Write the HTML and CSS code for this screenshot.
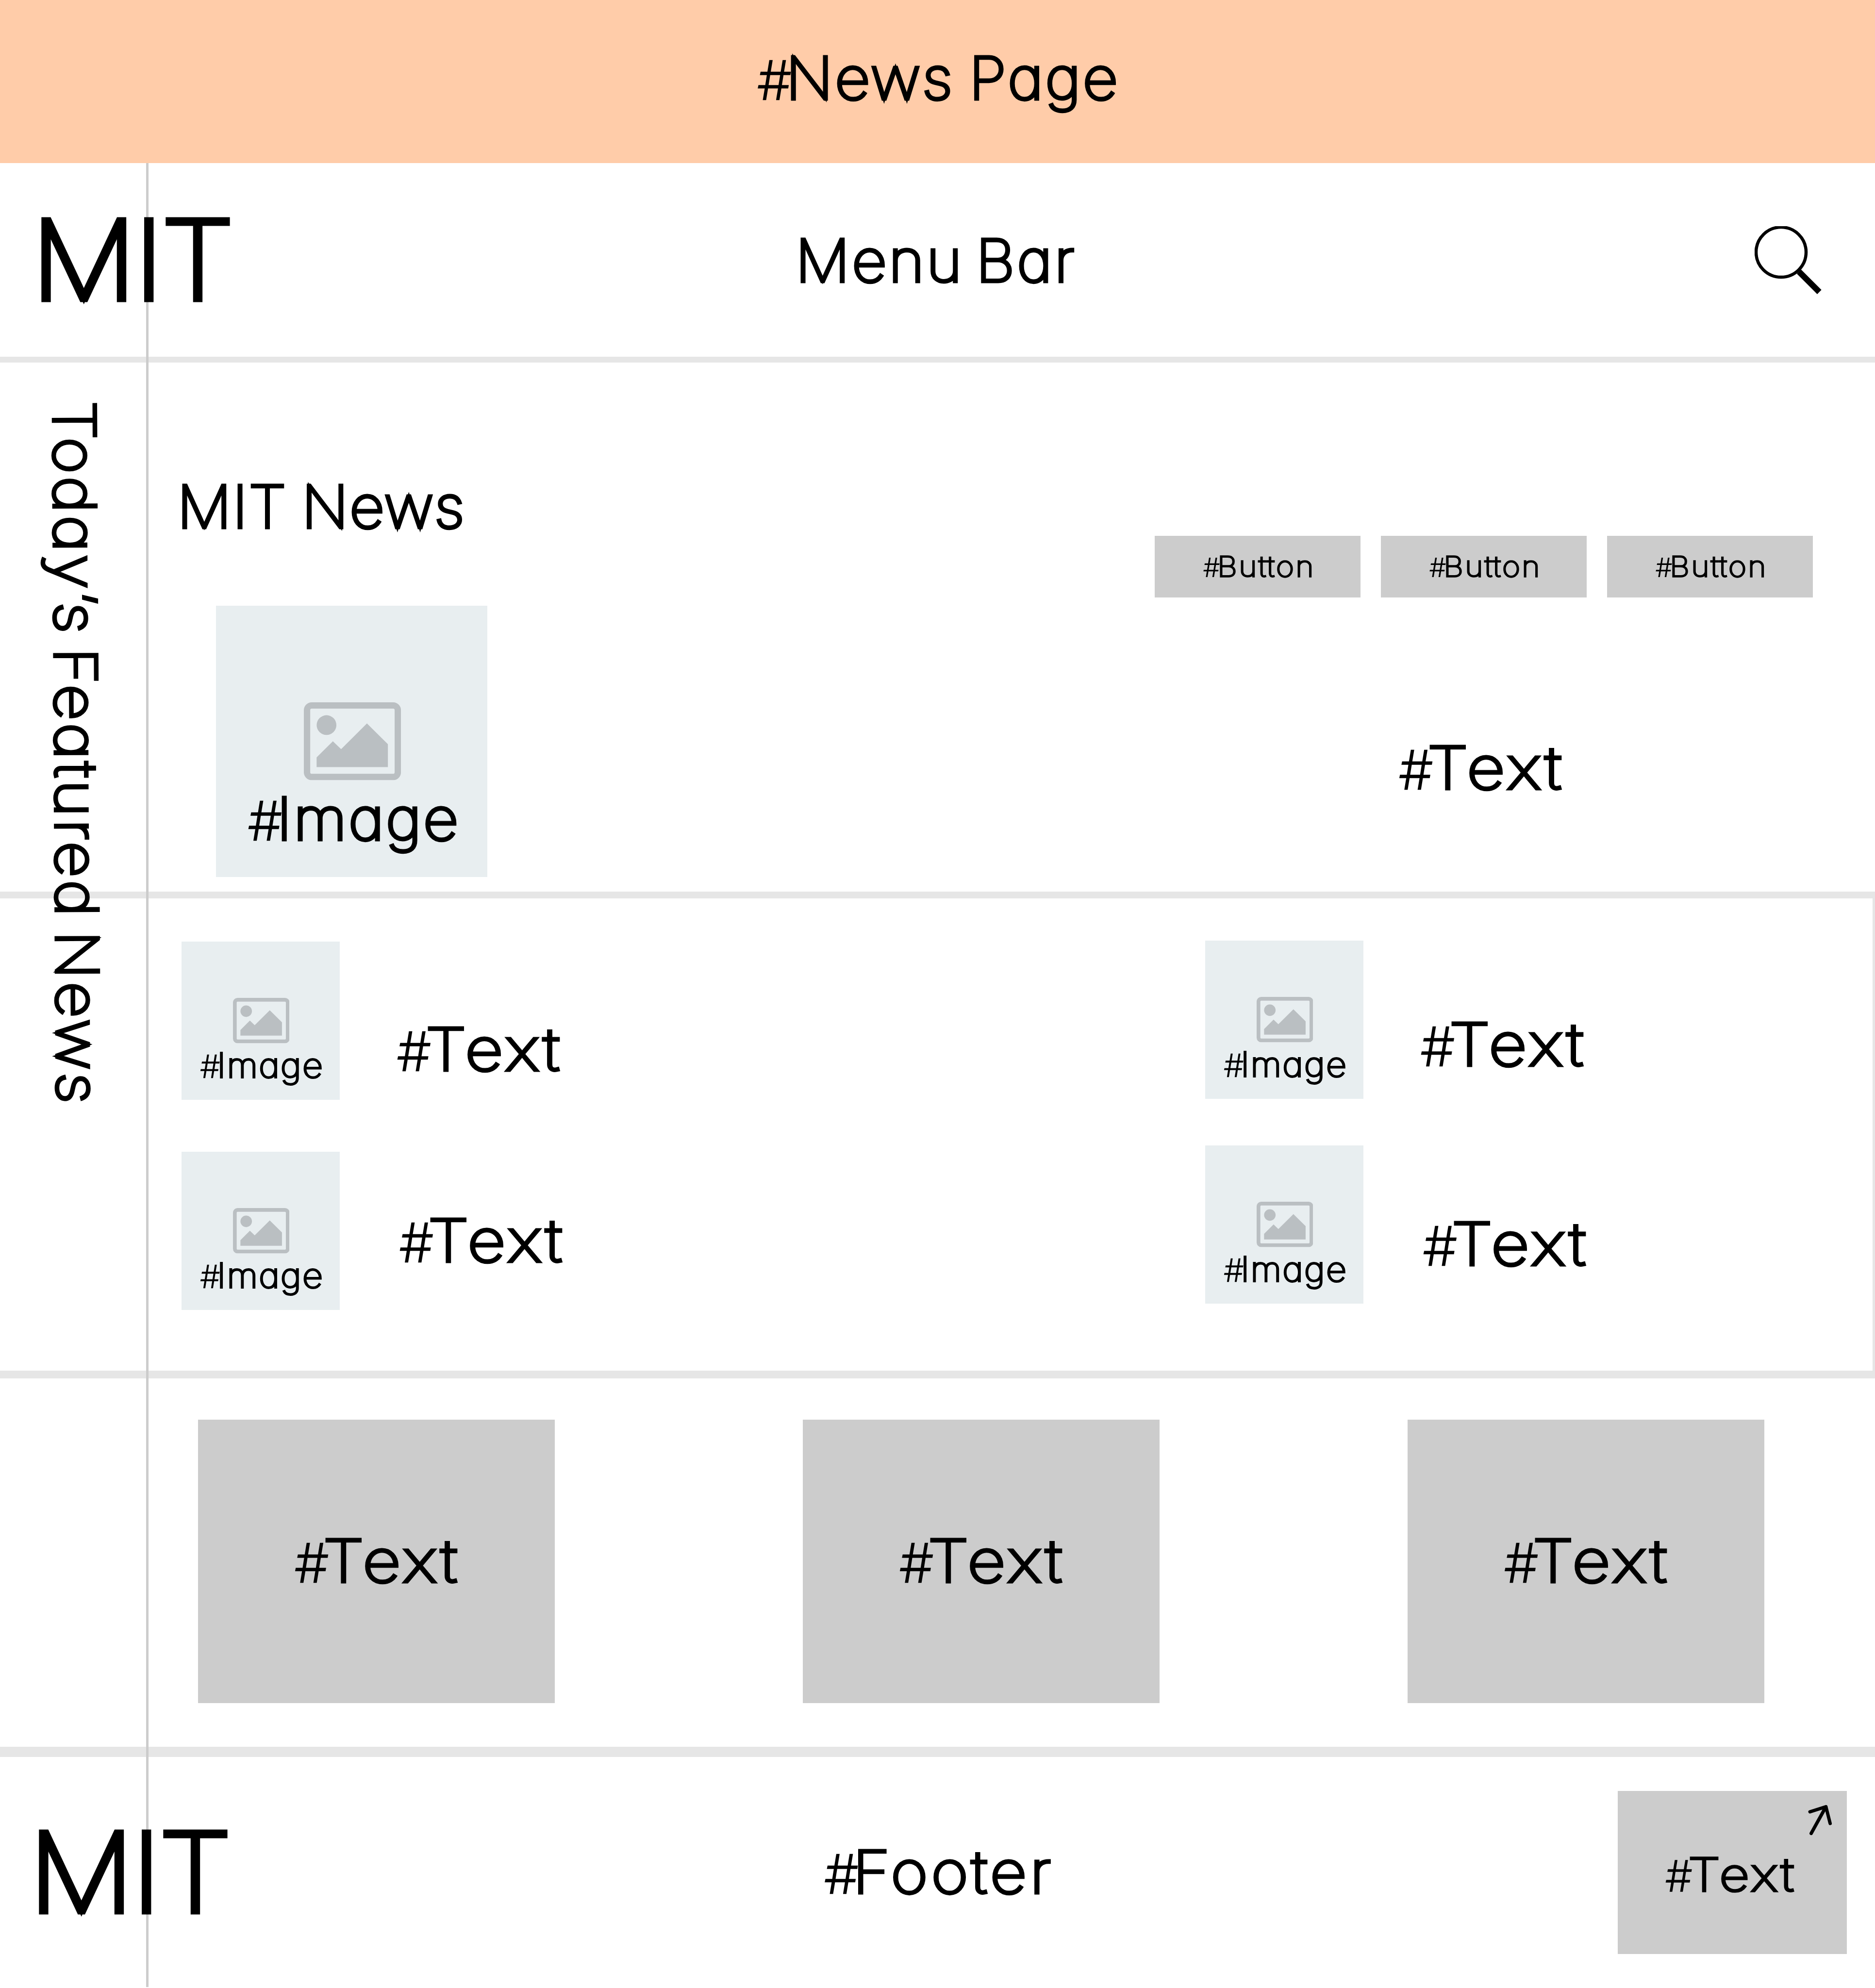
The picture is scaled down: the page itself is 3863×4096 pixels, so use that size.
FILE: index.html
```html
<!DOCTYPE html>
<html lang="en">
<head>
<meta charset="utf-8">
<title>News Page</title>
<link rel="stylesheet" href="styles.css">
</head>
<body>
<svg class="defs" aria-hidden="true">
  <symbol id="picture" viewBox="215.7 237.5 238.3 191">
    <rect x="223.5" y="245.3" width="222.7" height="175.4" rx="11.5" fill="none" stroke="#babfc2" stroke-width="15.6"/>
    <circle cx="271.3" cy="293.4" r="24.2" fill="#babfc2"/>
    <path d="M247 372.7 286.9 333 307.1 352.4 370.5 289.4 421.9 340.3V396.5H247Z" fill="#babfc2"/>
  </symbol>
</svg>

<header class="banner"><h1 class="label t-page"><span class="hash">#</span><span class="word">News Page</span></h1></header>

<div class="topbar">
  <span class="logo">MIT</span>
  <nav class="label t-menu"><span class="word">Menu Bar</span></nav>
  <svg class="search" viewBox="0 0 140 140" fill="none" stroke="#000"><circle cx="54.5" cy="53.6" r="51.5" stroke-width="6.5"/><path d="M91.3 93.7 133.3 135.7" stroke-width="12.3"/></svg>
</div>

<section class="hero">
  <div class="hero-main">
    <h2 class="label t-mitnews"><span class="word">MIT News</span></h2>
    <figure class="image large"><svg><use href="#picture"/></svg><figcaption class="t-image"><span class="hash">#</span><span class="word">Image</span></figcaption></figure>
  </div>
  <div class="hero-side">
    <div class="buttons">
      <button class="t-button"><span class="hash">#</span><span class="word">Button</span></button>
      <button class="t-button"><span class="hash">#</span><span class="word">Button</span></button>
      <button class="t-button"><span class="hash">#</span><span class="word">Button</span></button>
    </div>
    <p class="label t-text"><span class="hash">#</span><span class="word">Text</span></p>
  </div>
</section>

<section class="features">
  <div class="column left">
    <article><figure class="image"><svg><use href="#picture"/></svg><figcaption class="t-image"><span class="hash">#</span><span class="word">Image</span></figcaption></figure><p class="label t-text"><span class="hash">#</span><span class="word">Text</span></p></article>
    <article><figure class="image"><svg><use href="#picture"/></svg><figcaption class="t-image"><span class="hash">#</span><span class="word">Image</span></figcaption></figure><p class="label t-text"><span class="hash">#</span><span class="word">Text</span></p></article>
  </div>
  <div class="column right">
    <article><figure class="image"><svg><use href="#picture"/></svg><figcaption class="t-image"><span class="hash">#</span><span class="word">Image</span></figcaption></figure><p class="label t-text"><span class="hash">#</span><span class="word">Text</span></p></article>
    <article><figure class="image"><svg><use href="#picture"/></svg><figcaption class="t-image"><span class="hash">#</span><span class="word">Image</span></figcaption></figure><p class="label t-text"><span class="hash">#</span><span class="word">Text</span></p></article>
  </div>
</section>

<section class="cards">
  <div class="card"><p class="label t-text"><span class="hash">#</span><span class="word">Text</span></p></div>
  <div class="card"><p class="label t-text"><span class="hash">#</span><span class="word">Text</span></p></div>
  <div class="card"><p class="label t-text"><span class="hash">#</span><span class="word">Text</span></p></div>
</section>

<footer class="footer">
  <span class="logo">MIT</span>
  <p class="label t-footer"><span class="hash">#</span><span class="word">Footer</span></p>
  <div class="link-card">
    <p class="label t-text"><span class="hash">#</span><span class="word">Text</span></p>
    <svg class="arrow" viewBox="0 0 60 70" fill="none" stroke="#000" stroke-width="6.9" stroke-linecap="round" stroke-linejoin="round"><path d="M8.5 61.5 38.9 6.5M6 17 38.9 6.5 47.6 41"/></svg>
  </div>
</footer>

<div class="rail"></div>
<p class="rail-title label">Today’s Featured News</p>
</body>
</html>
```
FILE: styles.css
```css
* { box-sizing: border-box; margin: 0; padding: 0; }

body {
  position: relative;
  width: 3863px;
  height: 4096px;
  overflow: hidden;
  background: #fff;
  color: #000;
  font-family: Inter, "Liberation Sans", sans-serif;
  font-weight: 100;
  font-feature-settings: "cv11";
}

.defs { position: absolute; width: 0; height: 0; }

/* Type: hairline weight thickened by an outline, which rounds the corners */
.label, .logo, button, figcaption { -webkit-text-stroke: 0.058em #000; white-space: nowrap; }
.label { padding-top: 3px; font-size: 119px; line-height: 119px; font-weight: 100; }
.logo { font-size: 222px; line-height: 222px; letter-spacing: -0.015em; transform: scaleX(1.085); transform-origin: 0 50%; }
.hash { font-size: 0.9em; letter-spacing: -0.095em; -webkit-text-stroke-width: 0.042em; }
.word { display: inline-block; transform-origin: 0 50%; }

.t-page .word { letter-spacing: 0.031em; word-spacing: -0.07em; transform: scaleX(1.06); margin-right: 0.28em; }
.t-menu .word { letter-spacing: 0.036em; word-spacing: -0.12em; transform: scaleX(1.05); margin-right: 0.21em; }
.t-mitnews .word { letter-spacing: 0.018em; word-spacing: -0.06em; transform: scaleX(1.05); }
.t-image .word { letter-spacing: 0.029em; transform: scaleX(1.06); margin-right: 0.126em; }
.t-text .word { letter-spacing: 0.063em; transform: scaleX(1.14); margin-right: 0.235em; }
.t-button .word { letter-spacing: 0.054em; transform: scaleX(1.1); margin-right: 0.19em; }
.t-footer .word { letter-spacing: 0.056em; transform: scaleX(1.1); margin-right: 0.26em; }

.banner {
  display: flex;
  justify-content: center;
  height: 336px;
  padding-top: 99px;
  background: #ffcca9;
}

.topbar {
  display: grid;
  grid-template-columns: 1fr auto 1fr;
  align-items: center;
  height: 411px;
  padding: 0 108px 0 65px;
  border-bottom: 12px solid #e6e6e6;
}
.topbar .label { margin-left: 33px; }
.search { justify-self: end; width: 140px; height: 140px; }

.hero {
  display: flex;
  justify-content: space-between;
  height: 1104px;
  padding: 0 128px 0 365px;
  border-bottom: 14px solid #e6e6e6;
}
.hero-main { padding-top: 235px; }
.hero-main .image { margin: 144px 0 0 80px; }
.hero-side { display: flex; flex-direction: column; align-items: center; padding-top: 357px; }
.hero-side .label { margin: 289px 13px 0 0; }

.buttons { display: flex; gap: 42px; }
button {
  width: 424px;
  height: 127px;
  border: 0;
  background: #ccc;
  color: inherit;
  font: 100 58px/58px Inter, "Liberation Sans", sans-serif;
}

.image {
  display: flex;
  flex-direction: column;
  align-items: center;
  width: 4.7em;
  height: 4.7em;
  padding: 1.676em 0 0 0.03em;
  background: #e8eef0;
  font-size: 69.35px;
  line-height: 1;
}
.image.large { font-size: 119px; }
.image svg { width: 1.682em; height: 1.348em; }
.image figcaption { margin-top: 0.167em; }

.features {
  display: grid;
  grid-template-columns: 2109px 1fr;
  height: 989px;
  padding-left: 374px;
  border-bottom: 16px solid #e6e6e6;
  border-right: 5px solid #e6e6e6;
}
.column { display: flex; flex-direction: column; }
.column.left { padding-top: 89px; gap: 107px; }
.column.right { padding-top: 87px; gap: 96px; }
article { display: flex; gap: 119px; }
.left article:first-child .label { margin-top: 160px; }
.left article:last-child .label { margin: 121px 0 0 5px; }
.right article:first-child .label { margin-top: 152px; }
.right article:last-child .label { margin: 141px 0 0 5px; }

.cards {
  display: flex;
  gap: 511px;
  height: 780px;
  padding: 85px 0 0 408px;
  border-bottom: 21px solid #e6e6e6;
}
.card {
  display: flex;
  align-items: center;
  justify-content: center;
  width: 735px;
  height: 584px;
  background: #ccc;
}

.footer {
  display: grid;
  grid-template-columns: 1fr auto 1fr;
  align-items: center;
  height: 476px;
  padding: 0 58px 0 60px;
}
.link-card {
  position: relative;
  display: flex;
  align-items: center;
  justify-content: center;
  justify-self: end;
  width: 472px;
  height: 336px;
  padding: 8px 10px 0 0;
  background: #ccc;
}
.link-card .label { font-size: 94px; line-height: 94px; }
.arrow { position: absolute; top: 26px; right: 22px; width: 60px; height: 70px; }

.logo, .label { position: relative; z-index: 1; }

.rail { position: absolute; top: 336px; bottom: 2px; left: 301px; width: 5px; background: #ccc; }
.rail-title {
  position: absolute;
  top: 826px;
  left: 214.5px;
  letter-spacing: 0.046em;
  word-spacing: -0.14em;
  transform: rotate(89.7deg) scaleX(1.08);
  transform-origin: 0 0;
}
```
